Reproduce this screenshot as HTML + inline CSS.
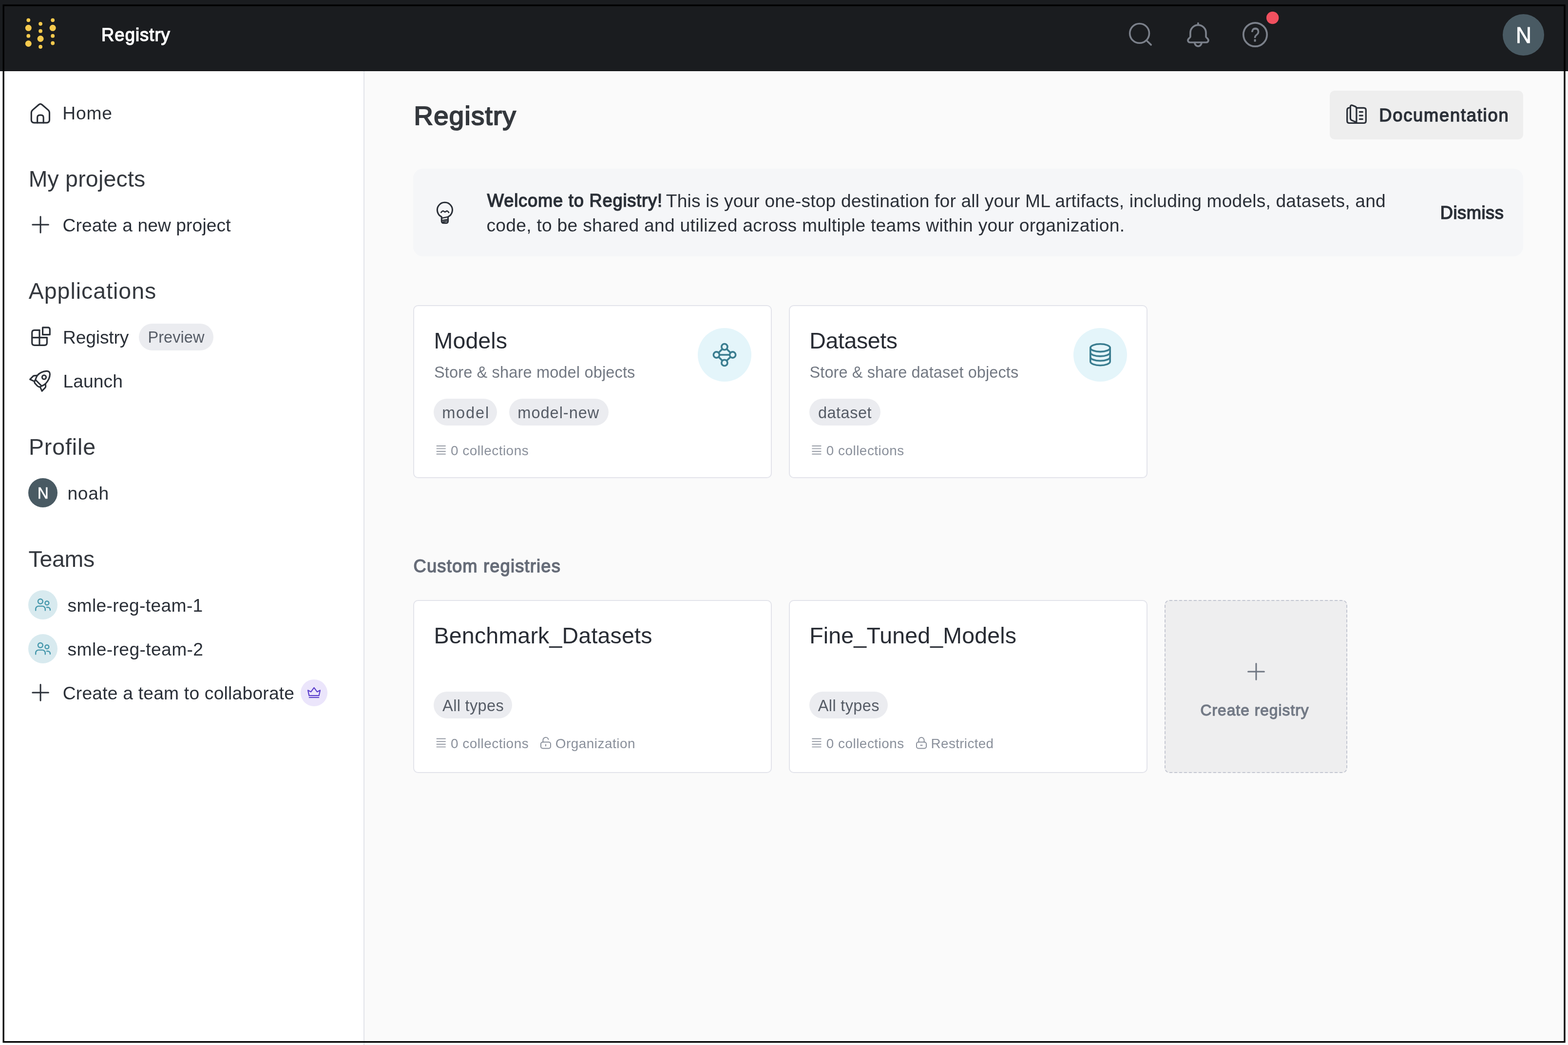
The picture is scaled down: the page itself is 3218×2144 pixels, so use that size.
<!DOCTYPE html>
<html lang="en">
<head>
<meta charset="utf-8">
<title>Registry</title>
<style>
html,body{margin:0;padding:0}
body{width:3218px;height:2144px;overflow:hidden;position:relative;background:#fafafa;font-family:"Liberation Sans",sans-serif}
header,nav,main,article,section,div,a,span,h1,h2,h3,p,b{position:absolute;box-sizing:border-box;display:block;margin:0;padding:0;font-weight:400;color:inherit;text-decoration:none}
.layer{will-change:transform}
.t{height:0;line-height:0;white-space:pre;font-kerning:normal}
svg{position:absolute;overflow:visible}
.topbar{background:#1a1c1f;border-bottom:1px solid #0e0f12}
.sidebar{background:#fff;border-right:2px solid #e2e3e9}
.content{background:#fafafa;border-top:1px solid #fff}
.avatar{background:#495a63;border-radius:50%}
.team{background:#d8eaef;border-radius:50%}
.upgrade{background:#ebe5fb;border-radius:50%}
.pill{background:#ebecf0;border-radius:40px}
.btn{background:#eeeeee;border-radius:10px}
.banner{background:#f5f6f8;border-radius:20px}
.card{background:#fff;border:2px solid #e3e4eb;border-radius:10px}
.badge{background:#e4f5fa;border-radius:50%}
.create{background:#eeeeef;border:2px dashed #c3c6d1;border-radius:10px}
.frame{left:0;top:0;pointer-events:none}
</style>
</head>
<body>
<header class="topbar layer" style="left:0px;top:0px;width:3218px;height:146px">
  <a class="logo" aria-label="Weights &amp; Biases" style="left:40px;top:30px;width:88px;height:76px">
    <svg class="ico" width="68" height="67" viewBox="50 35 68 67" style="left:10px;top:5px" fill="none" stroke-linecap="round" stroke-linejoin="round" aria-hidden="true"><g fill="#f7ca4e"><circle cx="58.3" cy="41.3" r="3.9"/><circle cx="58.3" cy="57.3" r="6.5"/><circle cx="58.3" cy="73.7" r="3.9"/><circle cx="58.3" cy="89.5" r="6.5"/><circle cx="83.1" cy="48.8" r="3.9"/><circle cx="83.1" cy="63.7" r="3.9"/><circle cx="83.1" cy="79.5" r="6.5"/><circle cx="83.1" cy="96.0" r="3.9"/><circle cx="108.2" cy="41.3" r="3.9"/><circle cx="108.2" cy="57.3" r="6.5"/><circle cx="108.2" cy="73.7" r="3.9"/><circle cx="108.2" cy="88.5" r="3.9"/></g></svg>
  </a>
  <div class="t brand" style="left:208.09px;top:72.48px;font-size:36.27px;color:#ffffff;letter-spacing:1.096px;-webkit-text-stroke:1.44px #ffffff">Registry</div>
  <a class="tool" aria-label="Search" style="left:2304px;top:34px;width:70px;height:70px">
    <svg class="ico" width="56" height="56" viewBox="2312 42 56 56" style="left:8px;top:8px" fill="none" stroke-linecap="round" stroke-linejoin="round" aria-hidden="true"><g stroke="#7b808a" stroke-width="3.6"><circle cx="2338.6" cy="68.4" r="19.9"/><path d="M2353 83 L2362.2 91.9"/></g></svg>
  </a>
  <a class="tool" aria-label="Notifications" style="left:2424px;top:34px;width:70px;height:70px">
    <svg class="ico" width="56" height="58" viewBox="2432 42 56 58" style="left:8px;top:8px" fill="none" stroke-linecap="round" stroke-linejoin="round" aria-hidden="true"><g stroke="#7b808a" stroke-width="3.7"><path d="M2442.9 75.5 V67.4 A16.05 16.05 0 0 1 2475 67.4 V75.5 C2475 77.5 2480 78.8 2480 82.8 C2480 85.4 2478 87 2475.6 87 H2442.3 C2439.9 87 2437.9 85.4 2437.9 82.8 C2437.9 78.8 2442.9 77.5 2442.9 75.5 Z"/><path d="M2458.9 47.7 V51"/><path d="M2452 89.2 C2453.5 93 2456 94.8 2458.9 94.8 C2461.8 94.8 2464.3 93 2465.8 89.2"/></g></svg>
  </a>
  <a class="tool" aria-label="Help" style="left:2541px;top:20px;width:89px;height:86px">
    <svg class="ico" width="56" height="56" viewBox="2548 43 56 56" style="left:7px;top:23px" fill="none" stroke-linecap="round" stroke-linejoin="round" aria-hidden="true"><circle cx="2576" cy="71" r="24.2" stroke="#7b808a" stroke-width="3.7"/><text transform="translate(2576.1 84.9) scale(0.78 0.98)" x="0" y="0" text-anchor="middle" font-family="Liberation Sans, sans-serif" font-size="42" fill="#7b808a" stroke="#7b808a" stroke-width="0.9">?</text></svg>
    <svg class="ico" width="28" height="28" viewBox="2598 23 28 28" style="left:57px;top:3px" fill="none" stroke-linecap="round" stroke-linejoin="round" aria-hidden="true"><circle cx="2611.7" cy="36.5" r="12.7" fill="#f0505f"/></svg>
  </a>
  <a class="avatar" style="left:3084px;top:29px;width:85px;height:85px">
    <span class="t" style="left:26.58px;top:42.55px;font-size:46.3px;color:#ffffff;-webkit-text-stroke:0.9px #ffffff;transform:scaleX(0.9538);transform-origin:0 0">N</span>
  </a>
</header>
<nav class="sidebar layer" style="left:0px;top:146px;width:748px;height:1998px">
  <a class="row" style="left:30px;top:41px;width:688px;height:90px">
    <svg class="ico" width="50" height="50" viewBox="58 207 50 50" style="left:28px;top:20px" fill="none" stroke-linecap="round" stroke-linejoin="round" aria-hidden="true"><g stroke="#2b3038" stroke-width="3.2"><path d="M64.3 245.8 V231.6 Q64.3 228 67 225.6 L79.6 214.7 Q82.9 211.9 86.2 214.7 L98.8 225.6 Q101.5 228 101.5 231.6 V245.8 Q101.5 251.8 95.5 251.8 H70.3 Q64.3 251.8 64.3 245.8 Z"/><path d="M76.7 251.8 V241.2 Q76.7 236.2 81.7 236.2 H84.2 Q89.2 236.2 89.2 241.2 V251.8"/></g></svg>
    <span class="t" style="left:98.29px;top:45px;font-size:37.2px;color:#2b3038;letter-spacing:0.828px">Home</span>
  </a>
  <h2 class="t" style="left:58.67px;top:221px;font-size:46.5px;color:#34383e;letter-spacing:0.186px">My projects</h2>
  <a class="row" style="left:30px;top:271px;width:688px;height:90px">
    <svg class="ico" width="50" height="50" viewBox="58 436 50 50" style="left:28px;top:19px" fill="none" stroke-linecap="round" stroke-linejoin="round" aria-hidden="true"><path d="M66.8 460.9 H99.4 M83.1 444.6 V477.2" stroke="#2b3038" stroke-width="3"/></svg>
    <span class="t" style="left:98.56px;top:45px;font-size:37.2px;color:#2b3038;letter-spacing:0.098px">Create a new project</span>
  </a>
  <h2 class="t" style="left:58.8px;top:451px;font-size:46.5px;color:#34383e;letter-spacing:0.975px">Applications</h2>
  <a class="row" style="left:30px;top:501px;width:688px;height:90px">
    <svg class="ico" width="50" height="50" viewBox="58 665 50 50" style="left:28px;top:18px" fill="none" stroke-linecap="round" stroke-linejoin="round" aria-hidden="true"><g stroke="#2b3038" stroke-width="3.2"><path d="M81 677.3 H70.7 Q65.7 677.3 65.7 682.3 V703.3 Q65.7 708.3 70.7 708.3 H91.4 Q96.4 708.3 96.4 703.3 V692.6"/><path d="M65.7 692.6 H96.4 M81 677.3 V708.3"/><path d="M87.6 671.9 H98.3 Q102.3 671.9 102.3 675.9 V686.6 H87.6 Z"/></g></svg>
    <span class="t" style="left:99.09px;top:45px;font-size:37.2px;color:#2b3038;letter-spacing:-0.161px">Registry</span>
    <span class="pill" style="left:255px;top:17px;width:153px;height:55px">
      <span class="t" style="left:18.46px;top:28px;font-size:32.55px;color:#565c66;letter-spacing:0.029px">Preview</span>
    </span>
  </a>
  <a class="row" style="left:30px;top:591px;width:688px;height:90px">
    <svg class="ico" width="52" height="52" viewBox="56 756 52 52" style="left:26px;top:19px" fill="none" stroke-linecap="round" stroke-linejoin="round" aria-hidden="true"><g stroke="#2b3038" stroke-width="3.1"><path d="M72.7 779.1 Q74.3 774 76.5 770.5 C81 765.2 88.5 761.9 95 761.4 Q102.3 760.9 102.4 767.8 C102.4 775 98.5 782 93.3 787.5 Q89.5 790.5 85.5 792 Z"/><circle cx="90.5" cy="773.9" r="4.1"/><path d="M72.2 779.8 Q69.5 783.5 72 786.8 L76.9 792 Q80 795 83.5 793.3"/><path d="M76.5 770.2 L70 770.9 Q68.6 771.1 67.6 772.1 L61.6 778.3 L70.4 782.4"/><path d="M93.4 788 L93.7 793 Q93.6 794.4 92.7 795.4 L86.2 802.3 L82.4 794.2"/></g></svg>
    <span class="t" style="left:99.39px;top:45px;font-size:37.2px;color:#2b3038;letter-spacing:0.130px">Launch</span>
  </a>
  <h2 class="t" style="left:58.97px;top:771px;font-size:46.5px;color:#34383e;letter-spacing:0.886px">Profile</h2>
  <a class="row" style="left:30px;top:821px;width:688px;height:90px">
    <span class="avatar" style="left:28px;top:14px;width:60px;height:60px">
      <span class="t" style="left:18.74px;top:30.7px;font-size:33px;color:#ffffff;-webkit-text-stroke:0.6px #ffffff;transform:scaleX(0.9498);transform-origin:0 0">N</span>
    </span>
    <span class="t" style="left:108.48px;top:45px;font-size:37.2px;color:#2b3038;letter-spacing:0.686px">noah</span>
  </a>
  <h2 class="t" style="left:58.47px;top:1001px;font-size:46.5px;color:#34383e;letter-spacing:-0.294px">Teams</h2>
  <a class="row" style="left:30px;top:1051px;width:688px;height:90px">
    <span class="team" style="left:28px;top:14px;width:60px;height:60px">
      <svg class="ico" width="44" height="44" viewBox="66 1219 44 44" style="left:8px;top:8px" fill="none" stroke-linecap="round" stroke-linejoin="round" aria-hidden="true"><g stroke="#4698ac" stroke-width="2.45"><circle cx="82.9" cy="1233.8" r="4.9"/><circle cx="96.4" cy="1237.2" r="3.9"/><path d="M73.2 1252.2 V1249.6 A6 6 0 0 1 79.2 1243.6 H86.8 A6 6 0 0 1 92.8 1249.6 V1252.2"/><path d="M96 1245.9 H97.9 A5 5 0 0 1 102.9 1250.9 V1251.8"/></g></svg>
    </span>
    <span class="t" style="left:108.62px;top:45px;font-size:37.2px;color:#2b3038;letter-spacing:0.352px">smle-reg-team-1</span>
  </a>
  <a class="row" style="left:30px;top:1141px;width:688px;height:90px">
    <span class="team" style="left:28px;top:14px;width:60px;height:60px">
      <svg class="ico" width="44" height="44" viewBox="66 1309 44 44" style="left:8px;top:8px" fill="none" stroke-linecap="round" stroke-linejoin="round" aria-hidden="true"><g stroke="#4698ac" stroke-width="2.45"><circle cx="82.9" cy="1323.8" r="4.9"/><circle cx="96.4" cy="1327.2" r="3.9"/><path d="M73.2 1342.2 V1339.6 A6 6 0 0 1 79.2 1333.6 H86.8 A6 6 0 0 1 92.8 1339.6 V1342.2"/><path d="M96 1335.9 H97.9 A5 5 0 0 1 102.9 1340.9 V1341.8"/></g></svg>
    </span>
    <span class="t" style="left:108.62px;top:45px;font-size:37.2px;color:#2b3038;letter-spacing:0.402px">smle-reg-team-2</span>
  </a>
  <a class="row" style="left:30px;top:1231px;width:688px;height:90px">
    <svg class="ico" width="50" height="50" viewBox="58 1396 50 50" style="left:28px;top:19px" fill="none" stroke-linecap="round" stroke-linejoin="round" aria-hidden="true"><path d="M66.8 1420.9 H99.4 M83.1 1404.6 V1437.2" stroke="#2b3038" stroke-width="3"/></svg>
    <span class="t" style="left:98.76px;top:45px;font-size:37.2px;color:#2b3038;letter-spacing:0.224px">Create a team to collaborate</span>
    <span class="upgrade" style="left:587px;top:17px;width:55px;height:55px">
      <svg class="ico" width="36" height="34" viewBox="626 1404 36 34" style="left:9px;top:10px" fill="none" stroke-linecap="round" stroke-linejoin="round" aria-hidden="true"><g stroke="#5c40cc" stroke-width="2.2"><path d="M632 1416.3 L638.2 1419.4 L644.5 1410.8 L650.8 1419.4 L657 1416.3 L654.6 1427.2 H634.4 Z"/><path d="M634.8 1431 H654.2"/></g></svg>
    </span>
  </a>
</nav>
<main class="content layer" style="left:748px;top:146px;width:2470px;height:1998px">
  <h1 class="t" style="left:101.53px;top:91.12px;font-size:54.41px;color:#34383d;letter-spacing:1.378px;-webkit-text-stroke:2.16px #34383d">Registry</h1>
  <a class="btn" style="left:1981px;top:39px;width:397px;height:100px">
    <svg class="ico" width="52" height="50" viewBox="2758 210 52 50" style="left:29px;top:24px" fill="none" stroke-linecap="round" stroke-linejoin="round" aria-hidden="true"><g stroke="#2b3038" stroke-width="3.2"><path d="M2783.9 221.4 H2798.8 Q2803.3 221.4 2803.3 225.9 V248 Q2803.3 252.5 2798.8 252.5 H2769.2 Q2764.7 252.5 2764.7 248 V225.9 Q2764.7 221.3 2769.6 221"/><path d="M2771.4 219 Q2771.4 215.3 2775 216 L2781.3 218.6 Q2783.9 219.7 2783.9 222.6 V252.3 M2783.9 251 L2774.3 246.9 Q2771.4 245.7 2771.4 242.6 V219"/><path d="M2790.4 229.7 H2796.4 M2790.4 237.1 H2796.4 M2790.4 244.3 H2796.4"/></g></svg>
    <span class="t" style="left:101.29px;top:51.48px;font-size:36.27px;color:#2b3038;letter-spacing:1.781px;-webkit-text-stroke:1.44px #2b3038">Documentation</span>
  </a>
  <div class="banner" role="status" style="left:100px;top:199px;width:2278px;height:180px">
    <svg class="ico" width="46" height="56" viewBox="890 408 46 56" style="left:42px;top:62px" fill="none" stroke-linecap="round" stroke-linejoin="round" aria-hidden="true"><g stroke="#2b3038" stroke-width="3.1"><path d="M906.3 447.2 V444.8 A15.5 15.5 0 1 1 919.5 444.8 V447"/><path d="M906.3 447.2 V453.4 Q906.3 457.6 910.5 457.6 H915.3 Q919.5 457.6 919.5 453.4 V445.4"/><path d="M906.8 447.4 L919.2 445.1 M907.6 452.2 L918.6 450.2 M909.4 455 L917 453.6" stroke-width="2.5"/><path d="M905.3 435.8 Q908.6 431.4 911 433.6 Q913.3 436 915.4 433.8 Q917.8 431.3 921 436" stroke-width="2.7"/></g></svg>
    <p class="msg" style="left:142px;top:38px;width:1870px;height:106px">
      <b class="t" style="left:9.82px;top:28.48px;font-size:36.27px;color:#2b3038;letter-spacing:0.802px;-webkit-text-stroke:1.44px #2b3038">Welcome to Registry!</b>
      <span class="t" style="left:376.82px;top:28px;font-size:37.2px;color:#2b3038;letter-spacing:0.163px">This is your one-stop destination for all your ML artifacts, including models, datasets, and</span>
      <span class="t" style="left:8.44px;top:78px;font-size:37.2px;color:#2b3038;letter-spacing:0.279px">code, to be shared and utilized across multiple teams within your organization.</span>
    </p>
    <a class="dismiss" style="left:2082px;top:60px;width:176px;height:60px">
      <span class="t" style="left:25.69px;top:31.48px;font-size:36.27px;color:#2b3038;letter-spacing:0.533px;-webkit-text-stroke:1.44px #2b3038">Dismiss</span>
    </a>
  </div>
  <section class="grid" style="left:100px;top:479px;width:1507px;height:355px">
    <article class="card" style="left:0px;top:0px;width:736px;height:355px">
      <h3 class="t" style="left:40.57px;top:71px;font-size:46.5px;color:#282c34;letter-spacing:0.117px">Models</h3>
      <p class="t" style="left:40.88px;top:136px;font-size:32.55px;color:#737983;letter-spacing:0.140px">Store &amp; share model objects</p>
      <div class="badge" style="left:582px;top:45px;width:110px;height:110px">
        <svg class="ico" width="54" height="56" viewBox="1460 700 54 56" style="left:28px;top:27px" fill="none" stroke-linecap="round" stroke-linejoin="round" aria-hidden="true"><g stroke="#3a7d90" stroke-width="3.6"><path d="M1470.4 728 L1486.9 711.6 L1503.6 728 L1486.9 744.4 Z M1470.4 728 H1503.6"/><g fill="#e4f5fa"><circle cx="1486.9" cy="711.6" r="6.1"/><circle cx="1470.4" cy="728" r="6.1"/><circle cx="1503.6" cy="728" r="6.1"/><circle cx="1486.9" cy="744.4" r="6.1"/></g></g></svg>
      </div>
      <span class="pill" style="left:40px;top:190px;width:130px;height:55px">
        <span class="t" style="left:17.17px;top:29px;font-size:32.55px;color:#565c66;letter-spacing:1.831px">model</span>
      </span>
      <span class="pill" style="left:195px;top:190px;width:203.5px;height:55px">
        <span class="t" style="left:17.37px;top:29px;font-size:32.55px;color:#565c66;letter-spacing:0.966px">model-new</span>
      </span>
      <div class="meta" style="left:40px;top:276px;width:650px;height:44px">
        <svg class="ico" width="26" height="26" viewBox="893 911 26 26" style="left:3px;top:7px" fill="none" stroke-linecap="round" stroke-linejoin="round" aria-hidden="true"><path d="M895.7 914.9 H914.7 M895.7 920.5 H914.7 M895.7 926.1 H914.7 M895.7 931.7 H914.7" stroke="#8a909b" stroke-width="1.7" stroke-linecap="butt"/></svg>
        <span class="t" style="left:35.03px;top:21px;font-size:27.9px;color:#8a909b;letter-spacing:0.509px">0 collections</span>
      </div>
    </article>
    <article class="card" style="left:771px;top:0px;width:736px;height:355px">
      <h3 class="t" style="left:40.27px;top:71px;font-size:46.5px;color:#282c34;letter-spacing:-0.402px">Datasets</h3>
      <p class="t" style="left:40.58px;top:136px;font-size:32.55px;color:#737983;letter-spacing:0.058px">Store &amp; share dataset objects</p>
      <div class="badge" style="left:582px;top:45px;width:110px;height:110px">
        <svg class="ico" width="52" height="56" viewBox="2232 700 52 56" style="left:29px;top:27px" fill="none" stroke-linecap="round" stroke-linejoin="round" aria-hidden="true"><g stroke="#3a7d90" stroke-width="3.6"><ellipse cx="2258" cy="713.7" rx="20.2" ry="7.9"/><path d="M2237.8 713.7 V741.8 A20.2 7.9 0 0 0 2278.2 741.8 V713.7"/><path d="M2237.8 723 A20.2 7.9 0 0 0 2278.2 723 M2237.8 732.4 A20.2 7.9 0 0 0 2278.2 732.4"/></g></svg>
      </div>
      <span class="pill" style="left:40px;top:190px;width:146px;height:55px">
        <span class="t" style="left:17.88px;top:29px;font-size:32.55px;color:#565c66;letter-spacing:0.489px">dataset</span>
      </span>
      <div class="meta" style="left:39.7px;top:276px;width:650px;height:44px">
        <svg class="ico" width="26" height="26" viewBox="1664 911 26 26" style="left:3.3px;top:7px" fill="none" stroke-linecap="round" stroke-linejoin="round" aria-hidden="true"><path d="M1666.4 914.9 H1685.4 M1666.4 920.5 H1685.4 M1666.4 926.1 H1685.4 M1666.4 931.7 H1685.4" stroke="#8a909b" stroke-width="1.7" stroke-linecap="butt"/></svg>
        <span class="t" style="left:35.03px;top:21px;font-size:27.9px;color:#8a909b;letter-spacing:0.509px">0 collections</span>
      </div>
    </article>
  </section>
  <h2 class="t" style="left:100.62px;top:1015.48px;font-size:36.27px;color:#666c78;letter-spacing:1.189px;-webkit-text-stroke:1.44px #666c78">Custom registries</h2>
  <section class="grid" style="left:100px;top:1084px;width:1917px;height:355px">
    <article class="card" style="left:0px;top:0px;width:736px;height:355px">
      <h3 class="t" style="left:40.57px;top:71px;font-size:46.5px;color:#282c34;letter-spacing:0.197px">Benchmark_Datasets</h3>
      <span class="pill" style="left:40px;top:186px;width:161px;height:55px">
        <span class="t" style="left:18.1px;top:29px;font-size:32.55px;color:#565c66;letter-spacing:0.325px">All types</span>
      </span>
      <div class="meta" style="left:40px;top:272px;width:650px;height:44px">
        <svg class="ico" width="26" height="26" viewBox="893 1512 26 26" style="left:3px;top:7px" fill="none" stroke-linecap="round" stroke-linejoin="round" aria-hidden="true"><path d="M895.7 1515.7 H914.7 M895.7 1521.3 H914.7 M895.7 1526.9 H914.7 M895.7 1532.5 H914.7" stroke="#8a909b" stroke-width="1.7" stroke-linecap="butt"/></svg>
        <span class="t" style="left:35.03px;top:21px;font-size:27.9px;color:#8a909b;letter-spacing:0.509px">0 collections</span>
        <svg class="ico" width="26" height="29" viewBox="1107 1510 26 29" style="left:217px;top:5px" fill="none" stroke-linecap="round" stroke-linejoin="round" aria-hidden="true"><g stroke="#8a909b" stroke-width="2"><rect x="1110" y="1522.6" width="20" height="12.8" rx="4"/><path d="M1114.4 1522.6 V1518.4 A5.6 5.6 0 0 1 1125.4 1517.0"/><path d="M1120 1527.4 V1530.6"/></g></svg>
        <span class="t" style="left:249.79px;top:21px;font-size:27.9px;color:#8a909b;letter-spacing:0.508px">Organization</span>
      </div>
    </article>
    <article class="card" style="left:771px;top:0px;width:736px;height:355px">
      <h3 class="t" style="left:40.27px;top:71px;font-size:46.5px;color:#282c34;letter-spacing:0.162px">Fine_Tuned_Models</h3>
      <span class="pill" style="left:40px;top:186px;width:161px;height:55px">
        <span class="t" style="left:17.8px;top:29px;font-size:32.55px;color:#565c66;letter-spacing:0.325px">All types</span>
      </span>
      <div class="meta" style="left:39.7px;top:272px;width:650px;height:44px">
        <svg class="ico" width="26" height="26" viewBox="1664 1512 26 26" style="left:3.3px;top:7px" fill="none" stroke-linecap="round" stroke-linejoin="round" aria-hidden="true"><path d="M1666.4 1515.7 H1685.4 M1666.4 1521.3 H1685.4 M1666.4 1526.9 H1685.4 M1666.4 1532.5 H1685.4" stroke="#8a909b" stroke-width="1.7" stroke-linecap="butt"/></svg>
        <span class="t" style="left:35.03px;top:21px;font-size:27.9px;color:#8a909b;letter-spacing:0.509px">0 collections</span>
        <svg class="ico" width="26" height="29" viewBox="1878 1510 26 29" style="left:217.3px;top:5px" fill="none" stroke-linecap="round" stroke-linejoin="round" aria-hidden="true"><g stroke="#8a909b" stroke-width="2"><rect x="1881" y="1522.6" width="20" height="12.8" rx="4"/><path d="M1885.4 1522.6 V1518.6 A5.6 5.6 0 0 1 1896.6 1518.6 V1522.6"/><path d="M1889.4 1529.0 H1892.6"/></g></svg>
        <span class="t" style="left:249.92px;top:21px;font-size:27.9px;color:#8a909b;letter-spacing:0.328px">Restricted</span>
      </div>
    </article>
    <a class="create" style="left:1542px;top:0px;width:375px;height:355px">
      <svg class="ico" width="50" height="50" viewBox="2553 1353 50 50" style="left:161px;top:120px" fill="none" stroke-linecap="round" stroke-linejoin="round" aria-hidden="true"><path d="M2561.6 1377.9 H2594.4 M2578 1361.5 V1394.3" stroke="#6f7682" stroke-width="3"/></svg>
      <span class="t" style="left:71.54px;top:223.57px;font-size:31.74px;color:#737a86;letter-spacing:1.006px;-webkit-text-stroke:1.26px #737a86">Create registry</span>
    </a>
  </section>
</main>
<svg class="frame" width="3218" height="2144" viewBox="0 0 3218 2144" aria-hidden="true"><rect x="7.15" y="10.95" width="3203.85" height="2126.75" fill="none" stroke="#000" stroke-width="3.3"/></svg>
</body>
</html>
